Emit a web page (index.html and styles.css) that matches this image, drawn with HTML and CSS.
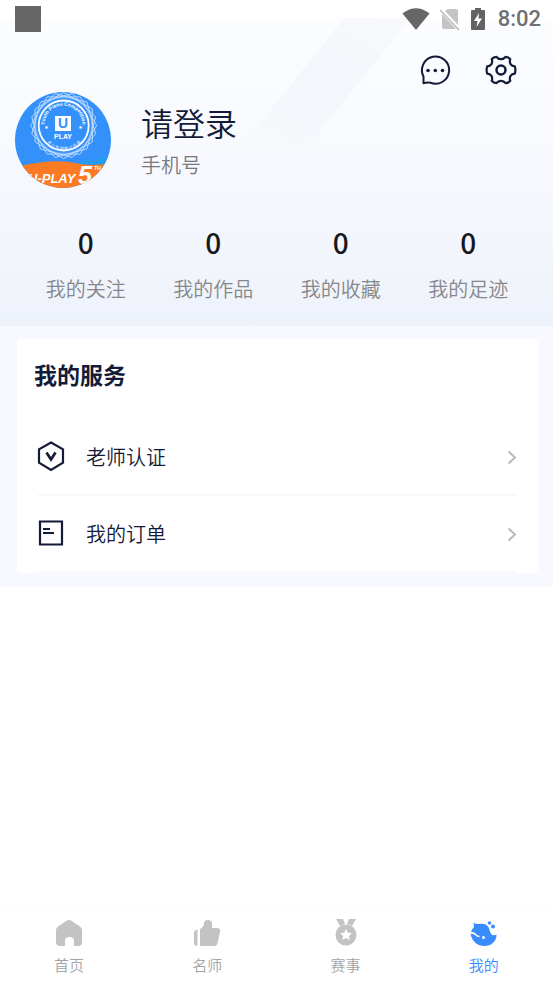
FILE: index.html
```html
<!DOCTYPE html>
<html lang="zh-CN">
<head>
  <meta charset="UTF-8">
  <meta name="viewport" content="width=device-width, initial-scale=1">
  <title>我的</title>
  <link rel="stylesheet" href="styles.css">
</head>
<body>

  <header class="profile">
    <svg class="profile-band" width="180" height="128" viewBox="0 0 180 128" aria-hidden="true">
      <defs>
        <linearGradient id="band" x1="1" y1="0" x2="0.2" y2="1">
          <stop offset="0" stop-color="#f8f9fd"/>
          <stop offset="0.6" stop-color="#f3f6fb"/>
          <stop offset="1" stop-color="#f6f8fc"/>
        </linearGradient>
      </defs>
      <path d="M101 0H168L71 120Q66 127 58 127H0Z" fill="url(#band)"/>
    </svg>

    <div class="status-bar">
      <span class="status-square"></span>
      <div class="status-icons">
        <svg width="28" height="24" viewBox="0 0 28 24"><path d="M0.500 6.500Q14-4 27.500 6.500L14 23Z" fill="#666"/></svg>
        <svg width="20" height="24" viewBox="0 0 20 24"><path d="M8 2H16Q18 2 18 4V18L5 4ZM2 7L16 22H4Q2 22 2 20Z" fill="#c4c4c4"/><path d="M0 3L19 23" stroke="#b9b9b9" stroke-width="1.500"/></svg>
        <svg width="16" height="24" viewBox="0 0 16 24"><path d="M5 1H11V3H14Q15 3 15 4V22Q15 23 14 23H2Q1 23 1 22V4Q1 3 2 3H5Z" fill="#636363"/><path d="M9 6L4 14H7.500L6.500 20L12 11.500H8.500Z" fill="#fff"/></svg>
        <span class="clock">8:02</span>
      </div>
    </div>

    <div class="actions">
      <button class="icon-btn" type="button" aria-label="消息">
        <svg width="32" height="32" viewBox="0 0 32 32"><path d="M4.500 29.200V22.500A13.600 13.600 0 1 1 11.500 28.800Q8 28.300 4.500 29.200Z" fill="none" stroke="#131b38" stroke-width="2" stroke-linejoin="round"/><g fill="#131b38"><circle cx="9" cy="16.500" r="1.800"/><circle cx="16.300" cy="16.500" r="1.800"/><circle cx="23.500" cy="16.500" r="1.800"/></g></svg>
      </button>
      <button class="icon-btn" type="button" aria-label="设置">
        <svg width="32" height="32" viewBox="0 0 32 32"><g fill="none" stroke="#131b38" stroke-width="2.200" stroke-linejoin="round"><path d="M11.500 2.800C13.500 5.800 18.500 5.800 20.500 2.800Q23.500 3 25.300 5.200C23.800 9 26 12 29.800 12.300Q31 16 29.800 19.700C26 20 23.800 23 25.300 26.800Q23.500 29 20.500 29.200C18.500 26.200 13.500 26.200 11.500 29.200Q8.500 29 6.700 26.800C8.200 23 6 20 2.200 19.700Q1 16 2.200 12.300C6 12 8.200 9 6.700 5.200Q8.500 3 11.500 2.800Z"/><circle cx="16" cy="16" r="4.500" stroke-width="2.500"/></g></svg>
      </button>
    </div>

    <div class="user">
      <svg class="avatar" viewBox="0 0 96 96" aria-label="头像">
        <defs>
          <clipPath id="round"><circle cx="48" cy="48" r="48"/></clipPath>
          <path id="arcTop" d="M30 37A19 19 0 1 1 67 37"/>
          <path id="arcBottom" d="M27 36A22 22 0 0 0 71 36"/>
          <polygon id="hex" points="33,0 16.500,28.600 -16.500,28.600 -33,0 -16.500,-28.600 16.500,-28.600"/>
        </defs>
        <g clip-path="url(#round)">
          <rect width="96" height="96" fill="#3490fb"/>
          <g transform="translate(48.700 33.500)" fill="none" stroke="#cfe5ff" stroke-width="0.800">
            <use href="#hex"/>
            <use href="#hex" transform="rotate(15)"/>
            <use href="#hex" transform="rotate(30)"/>
            <use href="#hex" transform="rotate(45)"/>
          </g>
          <circle cx="48.700" cy="33.500" r="28" fill="#3490fb" stroke="#9dcbff" stroke-width="0.600"/>
          <circle cx="48.700" cy="33.500" r="25" fill="none" stroke="#fff" stroke-width="1.800"/>
          <text class="seal-text"><textPath href="#arcTop" startOffset="50%" text-anchor="middle">Youth Piano Competition</textPath></text>
          <text class="seal-cn"><textPath href="#arcBottom" startOffset="50%" text-anchor="middle">青 少 年 钢 琴 公 开 赛</textPath></text>
          <rect x="40" y="24" width="16" height="15" fill="#fff"/>
          <text class="seal-u" x="48" y="36" text-anchor="middle">U</text>
          <text class="seal-play" x="48" y="47" text-anchor="middle">PLAY</text>
          <text class="seal-star" x="31.500" y="36.500" text-anchor="middle">★</text>
          <text class="seal-star" x="65.500" y="36.500" text-anchor="middle">★</text>
          <path d="M64 71L71 67L76 69L84 66L96 64V76H64Z" fill="#279bf0"/>
          <path d="M0 75Q38 66 60 71Q76 75 96 71V96H0Z" fill="#fb7a24"/>
          <text class="banner" x="13" y="91">U-PLAY</text>
          <text class="banner-num" x="63" y="92">5</text>
          <text class="banner-th" x="79" y="78">TH</text>
        </g>
      </svg>
      <div class="user-text">
        <a class="user-name" href="#">请登录</a>
        <span class="user-phone">手机号</span>
      </div>
    </div>

    <div class="stats">
      <a href="#"><b>0</b><span>我的关注</span></a>
      <a href="#"><b>0</b><span>我的作品</span></a>
      <a href="#"><b>0</b><span>我的收藏</span></a>
      <a href="#"><b>0</b><span>我的足迹</span></a>
    </div>
  </header>

  <main class="services">
    <section class="card">
      <h2>我的服务</h2>
      <a class="service" href="#">
        <svg width="28" height="32" viewBox="0 0 28 32"><path d="M14 1.500L26 8.300V21.700L14 29L2 21.700V8.300Z" fill="none" stroke="#131b38" stroke-width="2.200"/><path d="M9.500 11.500L14 18.500L18.500 11.500" fill="none" stroke="#131b38" stroke-width="2.700"/></svg>
        <span>老师认证</span>
        <svg class="arrow" width="10" height="16" viewBox="0 0 10 16"><path d="M1.500 2.500L8 8.500L1.500 14.500" fill="none" stroke="#bababa" stroke-width="2"/></svg>
      </a>
      <a class="service" href="#">
        <svg width="28" height="32" viewBox="0 0 28 32"><path d="M3 3.500H25V26.500H3Z" fill="none" stroke="#131b38" stroke-width="2.200"/><path d="M6 11H13M6 15H17" stroke="#131b38" stroke-width="1.800"/></svg>
        <span>我的订单</span>
        <svg class="arrow" width="10" height="16" viewBox="0 0 10 16"><path d="M1.500 2.500L8 8.500L1.500 14.500" fill="none" stroke="#bababa" stroke-width="2"/></svg>
      </a>
    </section>
  </main>

  <nav class="tabs">
    <a href="#">
      <svg width="28" height="28" viewBox="0 0 28 28"><path d="M12 1.500Q14 0.300 16 1.500L25 7.500Q27 9 27 11V23Q27 27 23 27H19V22Q19 18 14.500 18Q10 18 10 22V27H5Q1 27 1 23V11Q1 9 3 7.500Z" fill="#c3c3c3"/></svg>
      <span>首页</span>
    </a>
    <a href="#">
      <svg width="28" height="28" viewBox="0 0 28 28"><path d="M4.500 10.500V27Q1 27 1 24V14Q1 11 4.500 10.500ZM7 10Q11 8 11 4Q11 1 15 1Q19 1 19 5V9H24Q28 9 27 13L24.500 24Q24 27 21 27H7Z" fill="#c3c3c3"/></svg>
      <span>名师</span>
    </a>
    <a href="#">
      <svg width="28" height="28" viewBox="0 0 28 28"><g fill="#c3c3c3"><path d="M4 0H11L13 5L8 7ZM17 0H24L20 7L15 5Z"/><circle cx="14" cy="16" r="10.500"/></g><path d="M14 10L15.800 13.700L19.800 14.200L16.900 17L17.600 21L14 19.100L10.400 21L11.100 17L8.200 14.200L12.200 13.700Z" fill="#fff"/></svg>
      <span>赛事</span>
    </a>
    <a class="active" href="#">
      <svg width="28" height="28" viewBox="0 0 28 28"><g fill="#378cff"><path d="M3.500 3.500Q6 5.500 9 5Q16 3.500 19 9Q20.500 15.500 22.500 16Q24.500 16.500 26.500 15.500Q27 21 21 25.500Q18 27 13 27Q4 26 1 17Q0 12 4 8Z"/><circle cx="19.500" cy="4" r="1.700"/><circle cx="23" cy="7.500" r="2"/></g><path d="M0.500 14Q4 13.500 6 16Q7.500 17.500 9.500 17.500" fill="none" stroke="#fff" stroke-width="1.600"/><circle cx="13.500" cy="18.500" r="1.500" fill="#fff"/></svg>
      <span>我的</span>
    </a>
  </nav>

</body>
</html>
```

FILE: styles.css
```css
* { box-sizing: border-box; }
body {
  margin: 0;
  min-height: 100vh;
  display: flex;
  flex-direction: column;
  background: #fff;
  color: #131b38;
  font-family: "Noto Sans CJK SC", sans-serif;
  font-size: 20px;
  font-weight: 350;
  line-height: 30px;
}
a { color: inherit; text-decoration: none; }
svg { display: block; flex: none; }

.profile {
  position: relative;
  padding-bottom: 22px;
  background: linear-gradient(#fff 18px, #fcfdff 19px, #f7f9fe 50%, #eef2fa);
}
.profile-band { position: absolute; top: 18px; left: 44%; }
.profile > div { position: relative; }

.status-bar {
  display: flex;
  align-items: center;
  justify-content: space-between;
  height: 37px;
  padding: 0 12px 0 15px;
}
.status-square { width: 26px; height: 26px; background: #666; }
.status-icons { display: flex; align-items: center; gap: 10px; }
.clock { margin-left: 2px; font-family: Roboto, sans-serif; font-size: 22px; font-weight: 500; color: #707070; }

.actions {
  display: flex;
  justify-content: flex-end;
  gap: 34px;
  padding: 17px 36px 6px;
}
.icon-btn { padding: 0; border: 0; background: none; cursor: pointer; }

.user { display: flex; align-items: center; gap: 30px; padding: 0 15px; }
.avatar { width: 96px; height: 96px; }
.user-text { display: flex; flex-direction: column; gap: 4px; padding-bottom: 3px; }
.user-name { font-size: 32px; line-height: 48px; }
.user-phone { color: #77797f; }

.seal-text { font: bold 5px "Liberation Sans Narrow", "Liberation Sans", sans-serif; fill: #fff; }
.seal-cn { font-size: 4px; fill: #fff; }
.seal-u { font: bold 14px "Liberation Sans", sans-serif; fill: #3490fb; }
.seal-play { font: bold 7px "Liberation Sans Narrow", "Liberation Sans", sans-serif; fill: #fff; }
.seal-star { font: 5px "DejaVu Sans", sans-serif; fill: #fff; }
.banner { font: italic bold 13px "Liberation Sans", sans-serif; fill: #fff; }
.banner-num { font: italic bold 25px "Liberation Sans", sans-serif; fill: #fff; }
.banner-th { font: italic bold 5px "Liberation Sans", sans-serif; fill: #fff; }

.stats {
  display: grid;
  grid-template-columns: repeat(4, 1fr);
  padding: 36px 21px 0 22px;
}
.stats a { display: flex; flex-direction: column; align-items: center; gap: 14px; }
.stats b { font-size: 28px; line-height: 36px; font-weight: 500; color: #17181c; }
.stats span { color: #86878b; }

.services { padding: 13px 15px 14px 17px; background: #f8f9fe; }
.card { padding: 16px 21px 0; background: #fff; border-radius: 5px; }
.card h2 { margin: 0 0 26px -4px; font-size: 23px; line-height: 38px; font-weight: 700; }
.service {
  display: flex;
  align-items: center;
  height: 77px;
  border-bottom: 2px solid #f8f9fb;
}
.service svg:first-child { margin-left: -1px; }
.service span { flex: 1; margin-left: 21px; }

.tabs {
  display: grid;
  grid-template-columns: repeat(4, 1fr);
  margin-top: auto;
  padding: 13px 0 7px;
  border-top: 1px solid #fcfcfc;
  font-size: 15px;
  line-height: 22px;
  color: #a5a5a5;
}
.tabs a { display: flex; flex-direction: column; align-items: center; gap: 7px; }
.tabs .active { color: #378cff; }
```
